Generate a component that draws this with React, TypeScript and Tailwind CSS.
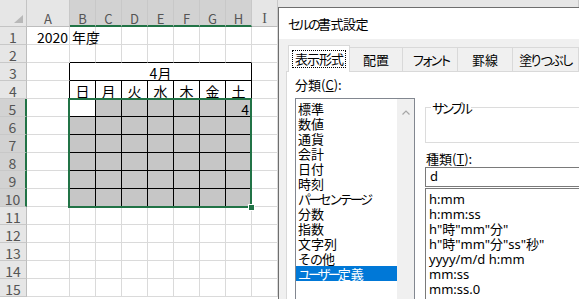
import clsx from "clsx";

const COLS = ["A", "B", "C", "D", "E", "F", "G", "H", "I", "J"];
const DAYS = ["日", "月", "火", "水", "木", "金", "土"];
const ROWS = Array.from({ length: 15 }, (_, i) => i + 1);

type Seg = [string, string];

const CATEGORIES: { key: string; segs: Seg[] }[] = [
  { key: "標準", segs: [["標準", ""]] },
  { key: "数値", segs: [["数値", ""]] },
  { key: "通貨", segs: [["通貨", ""]] },
  { key: "会計", segs: [["会計", ""]] },
  { key: "日付", segs: [["日付", ""]] },
  { key: "時刻", segs: [["時刻", ""]] },
  { key: "パーセンテージ", segs: [["パーセンテージ", "tracking-[-2.6px]"]] },
  { key: "分数", segs: [["分数", ""]] },
  { key: "指数", segs: [["指数", ""]] },
  { key: "文字列", segs: [["文字列", ""]] },
  { key: "その他", segs: [["その", "tracking-[-1px]"], ["他", ""]] },
  {
    key: "ユーザー定義",
    segs: [
      ["ユーザー", "tracking-[-3px]"],
      ["定義", ""],
    ],
  },
];

const TABS = [
  { label: "配置", w: "w-[53px]", cls: "" },
  { label: "フォント", w: "w-[55px]", cls: "tracking-[-4px]" },
  { label: "罫線", w: "w-[55px]", cls: "" },
  { label: "塗りつぶし", w: "w-[66px]", cls: "tracking-[-2.5px]" },
];

const FORMATS = [
  "h:mm",
  "h:mm:ss",
  'h"時"mm"分"',
  'h"時"mm"分"ss"秒"',
  "yyyy/m/d h:mm",
  "mm:ss",
  "mm:ss.0",
];

const isSelRow = (r: number) => r >= 5 && r <= 10;
const isSelCol = (c: number) => c >= 1 && c <= 7;

// c: 0 = A, 1..7 = B..H, 8 = I, 9 = J
const cellClass = (r: number, c: number) => {
  const inTable = r >= 3 && r <= 10 && isSelCol(c);
  const rightBlack = inTable || (c === 0 && r >= 3 && r <= 10);
  const bottomBlack = inTable || (r === 2 && isSelCol(c));
  const gray = isSelRow(r) && isSelCol(c) && !(r === 5 && c === 1);
  return clsx(
    "flex items-center border-r border-b whitespace-nowrap pt-[2px] text-[14px] leading-[16px] text-black",
    rightBlack ? "border-r-black" : "border-r-[#dadada]",
    bottomBlack ? "border-b-black" : "border-b-[#dadada]",
    gray && "bg-[#c6c6c6]"
  );
};

function Cell({ r, c }: { r: number; c: number }) {
  let content: React.ReactNode = null;
  let align = "";
  if (r === 1 && c === 0) {
    content = "2020";
    align = "justify-end pr-[1px]";
  } else if (r === 1 && c === 1) {
    content = "年度";
    align = "pl-[2px]";
  } else if (r === 4 && isSelCol(c)) {
    content = DAYS[c - 1];
    align = "justify-center";
  } else if (r === 5 && c === 7) {
    content = "4";
    align = "justify-end pr-[2px]";
  }
  return <div className={clsx(cellClass(r, c), align)}>{content}</div>;
}

function Sheet() {
  return (
    <div className="relative grid h-[299px] w-[579px] grid-cols-[27px_43px_repeat(7,26px)_26px_1fr] grid-rows-[27px_repeat(15,18px)] bg-white font-['Noto_Sans_CJK_JP',sans-serif]">
      {/* corner */}
      <div className="flex items-end justify-end border-r border-b border-[#c4c4c4] bg-[#e6e6e6] pr-[3px] pb-[3px]">
        <svg width="9" height="8" viewBox="0 0 9 8">
          <polygon points="9,0 9,8 0,8" fill="#b8b8b8" />
        </svg>
      </div>
      {COLS.map((col, i) => (
        <div
          key={col}
          className={clsx(
            "flex items-start justify-center border-r border-r-[#c8c8c8] pt-[11px] text-[13px] leading-[16px] text-[#555]",
            isSelCol(i)
              ? "border-b-2 border-b-[#217346] bg-[#d2d2d2]"
              : "border-b border-b-[#bdbdbd] bg-[#e6e6e6]",
            col === "I" && "font-['Liberation_Serif',serif] text-[14px]"
          )}
        >
          {col}
        </div>
      ))}
      {ROWS.map((r) => (
        <div key={r} className="contents">
          <div
            className={clsx(
              "flex items-center justify-center border-b border-b-[#c8c8c8] pt-[2px] text-[14px] leading-[16px] text-[#555]",
              isSelRow(r)
                ? "border-r-2 border-r-[#217346] bg-[#d2d2d2]"
                : "border-r border-r-[#bdbdbd] bg-[#e6e6e6]"
            )}
          >
            {r}
          </div>
          {r === 3 ? (
            <>
              <Cell r={3} c={0} />
              <div className="col-span-7 flex items-center justify-center border-r border-b border-black pt-[2px] text-[14px] leading-[16px] text-black">
                4月
              </div>
              <Cell r={3} c={8} />
              <Cell r={3} c={9} />
            </>
          ) : (
            COLS.map((_, c) => <Cell key={c} r={r} c={c} />)
          )}
        </div>
      ))}
      {/* selection overlay */}
      <div className="pointer-events-none absolute top-[98px] left-[68px] h-[110px] w-[184px] border-2 border-[#217346]" />
      <div className="absolute top-[204px] left-[248px] h-[7px] w-[7px] border border-white bg-[#217346]" />
    </div>
  );
}

function FormatDialog() {
  return (
    <div className="absolute top-[7px] left-[278px] h-[300px] w-[320px] border border-[#6e6e6e] bg-[#f0f0f0] font-['Noto_Sans_CJK_JP',sans-serif] text-black">
      <div className="flex h-[31px] items-center bg-white pl-[9px] text-[13px]">
        <span className="tracking-[-3px]">セルの</span>
        <span className="tracking-[-0.5px]">書式設定</span>
      </div>
      <div className="pt-[6px] pl-[7px]">
        <div className="flex h-[27px] items-end pl-[2px] text-[13px]">
          <div className="relative z-10 flex h-[27px] w-[62px] border-x border-t border-[#d9d9d9] bg-white px-[3px] pt-[4px] pb-[4px]">
            <div className="flex flex-1 items-center justify-center border border-dotted border-black tracking-[-1px]">
              表示形式
            </div>
          </div>
          {TABS.map((tab) => (
            <div
              key={tab.label}
              className={clsx(
                "flex h-[25px] items-center justify-center border-t border-r border-[#d9d9d9]",
                tab.w,
                tab.cls
              )}
            >
              {tab.label}
            </div>
          ))}
        </div>
        <div className="-mt-px flex h-[240px] gap-[10px] border border-[#d9d9d9] bg-white pl-[8px]">
          <div className="flex w-[120px] shrink-0 flex-col pt-[3px]">
            <div className="text-[13px] leading-[20px]">
              分類(<span className="underline">C</span>):
            </div>
            <div className="mt-[3px] flex h-[210px] border border-[#828790]">
              <div className="flex flex-1 flex-col pt-[2px] text-[13px] leading-[15px]">
                {CATEGORIES.map((item) => (
                  <div
                    key={item.key}
                    className={clsx(
                      "pl-[2px] whitespace-nowrap",
                      item.key === "ユーザー定義" && "bg-[#0078d7] text-white"
                    )}
                  >
                    {item.segs.map(([text, cls]) => (
                      <span key={text} className={cls}>
                        {text}
                      </span>
                    ))}
                  </div>
                ))}
              </div>
              <div className="flex w-[17px] justify-center bg-[#f0f0f0] pt-[11px]">
                <svg width="8" height="5" viewBox="0 0 8 5">
                  <path d="M0.5 4.5 L4 1 L7.5 4.5" fill="none" stroke="#a6a6a6" strokeWidth="1.2" />
                </svg>
              </div>
            </div>
          </div>
          <div className="flex min-w-0 flex-1 flex-col pt-[28px]">
            <fieldset className="h-[43px] border border-[#dcdcdc]">
              <legend className="ml-[5px] px-[1px] text-[13px] leading-[15px] tracking-[-3.5px]">
                サンプル
              </legend>
            </fieldset>
            <div className="mt-[8px] h-[16px] pl-[1px] text-[13px] leading-[16px]">
              種類(<span className="underline">T</span>):
            </div>
            <div className="flex h-[20px] items-center border border-[#7a7a7a] pl-[4px] font-['Noto_Sans','Noto_Sans_CJK_JP',sans-serif] text-[13px]">
              d
            </div>
            <div className="mt-[1px] flex h-[120px] flex-col border border-[#7a7a7a] pt-[3px] pl-[3px] font-['Noto_Sans','Noto_Sans_CJK_JP',sans-serif] text-[13px] leading-[15px]">
              {FORMATS.map((f) => (
                <div key={f} className="whitespace-nowrap">
                  {f}
                </div>
              ))}
            </div>
          </div>
        </div>
      </div>
    </div>
  );
}

export default function App() {
  return (
    <div className="relative h-[299px] w-[579px] overflow-hidden">
      <Sheet />
      <FormatDialog />
    </div>
  );
}
